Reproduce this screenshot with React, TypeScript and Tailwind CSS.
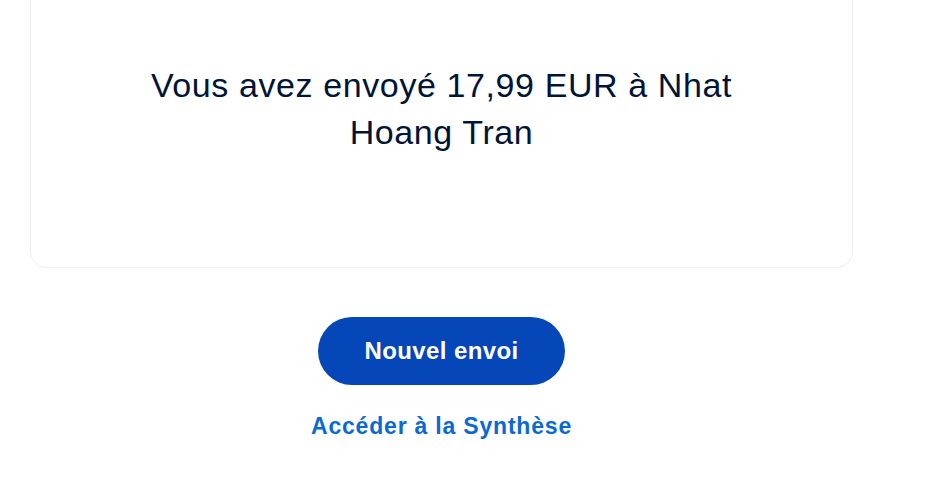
export default function App() {
  return (
    <div className="w-[929px] h-[481px] overflow-hidden bg-white font-['Liberation_Sans',Arial,sans-serif]">
      <div className="ml-[30px] w-[823px]">
        <div className="-mt-[40px] rounded-2xl border border-[#efefef] bg-white pt-[101px] pb-[111px] flex justify-center">
          <h1 className="w-[640px] text-center text-[34px] leading-[47px] text-[#001435] tracking-[0.6px]">
            Vous avez envoyé 17,99 EUR à Nhat Hoang Tran
          </h1>
        </div>
        <div className="mt-[49px] flex flex-col items-center">
          <button className="w-[247px] h-[68px] rounded-full bg-[#0546b8] text-white text-[24px] font-bold tracking-[0.4px]">
            Nouvel envoi
          </button>
          <a className="mt-[27px] text-[23px] leading-[28px] font-bold text-[#0a6ad1] tracking-[0.8px]">
            Accéder à la Synthèse
          </a>
        </div>
      </div>
    </div>
  );
}
